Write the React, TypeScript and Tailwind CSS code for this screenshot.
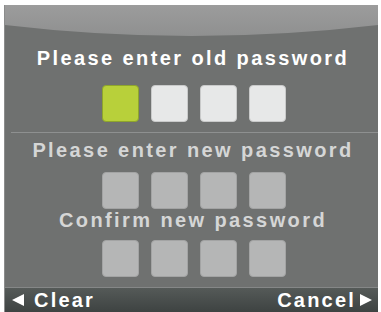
import React from 'react';

const Box: React.FC<{ kind: 'active' | 'empty' | 'dim' }> = ({ kind }) => {
  const cls =
    kind === 'active'
      ? 'bg-[#b8d03a] border-[#8ea52c]'
      : kind === 'empty'
      ? 'bg-[#e7e8e8] border-[#c9caca]'
      : 'bg-[#b5b6b6] border-[#a3a4a4]';
  return <div className={`w-[37px] h-[37px] rounded-[4px] border ${cls}`} />;
};

const Row: React.FC<{ first?: boolean; dim?: boolean }> = ({ first, dim }) => (
  <div className="flex justify-center gap-[12px] pl-[4px]">
    {[0, 1, 2, 3].map((i) => (
      <Box key={i} kind={dim ? 'dim' : first && i === 0 ? 'active' : 'empty'} />
    ))}
  </div>
);

const Title: React.FC<{ children: React.ReactNode; dim?: boolean; className?: string }> = ({ children, dim, className }) => (
  <div
    className={`text-center font-bold text-[20px] leading-[20px] tracking-[2.4px] pl-[3px] whitespace-nowrap ${
      dim ? 'text-[#d5d6d6]' : 'text-white'
    } ${className ?? ''}`}
  >
    {children}
  </div>
);

export default function App() {
  return (
    <div
      className="w-[381px] h-[312px] bg-white pl-[4px] pt-[5px] pr-[3px] overflow-hidden"
      style={{ fontFamily: '"Liberation Sans", Arial, sans-serif' }}
    >
      <div className="h-full bg-[#6f7170] border-l border-[#8b8c8c] flex flex-col">
        {/* top bar */}
        <div className="relative h-[34px] shrink-0">
          <svg className="absolute inset-0" width="100%" height="34" viewBox="0 0 373 34" preserveAspectRatio="none">
            <defs>
              <linearGradient id="tb" x1="0" y1="0" x2="0" y2="1">
                <stop offset="0" stopColor="#9c9c9c" />
                <stop offset="1" stopColor="#8f9090" />
              </linearGradient>
            </defs>
            <path d="M0 0 H373 V20 Q186 42 0 20 Z" fill="url(#tb)" />
          </svg>
        </div>

        <Title className="mt-[9px]">Please enter old password</Title>
        <div className="mt-[17px]">
          <Row first />
        </div>

        <div className="mt-[10px] ml-[6px] h-px bg-[#8e9090]" />

        <Title dim className="mt-[7px]">Please enter new password</Title>
        <div className="mt-[12px]">
          <Row dim />
        </div>
        <Title dim className="mt-[1px]">Confirm new password</Title>
        <div className="mt-[10px]">
          <Row dim />
        </div>

        {/* bottom bar */}
        <div className="mt-auto h-[25px] shrink-0 border-t border-[#858787] bg-gradient-to-b from-[#555a58] to-[#3e4342] flex items-center justify-between pl-[7px] pr-[6px] text-white font-bold text-[20px] leading-[20px] tracking-[2.2px]">
          <div className="flex items-center gap-[10px]">
            <svg width="12" height="12" viewBox="0 0 12 12">
              <polygon points="12,0 12,12 0,6" fill="#ffffff" />
            </svg>
            <span>Clear</span>
          </div>
          <div className="flex items-center gap-[4px]">
            <span>Cancel</span>
            <svg width="12" height="12" viewBox="0 0 12 12">
              <polygon points="0,0 0,12 12,6" fill="#ffffff" />
            </svg>
          </div>
        </div>
      </div>
    </div>
  );
}
